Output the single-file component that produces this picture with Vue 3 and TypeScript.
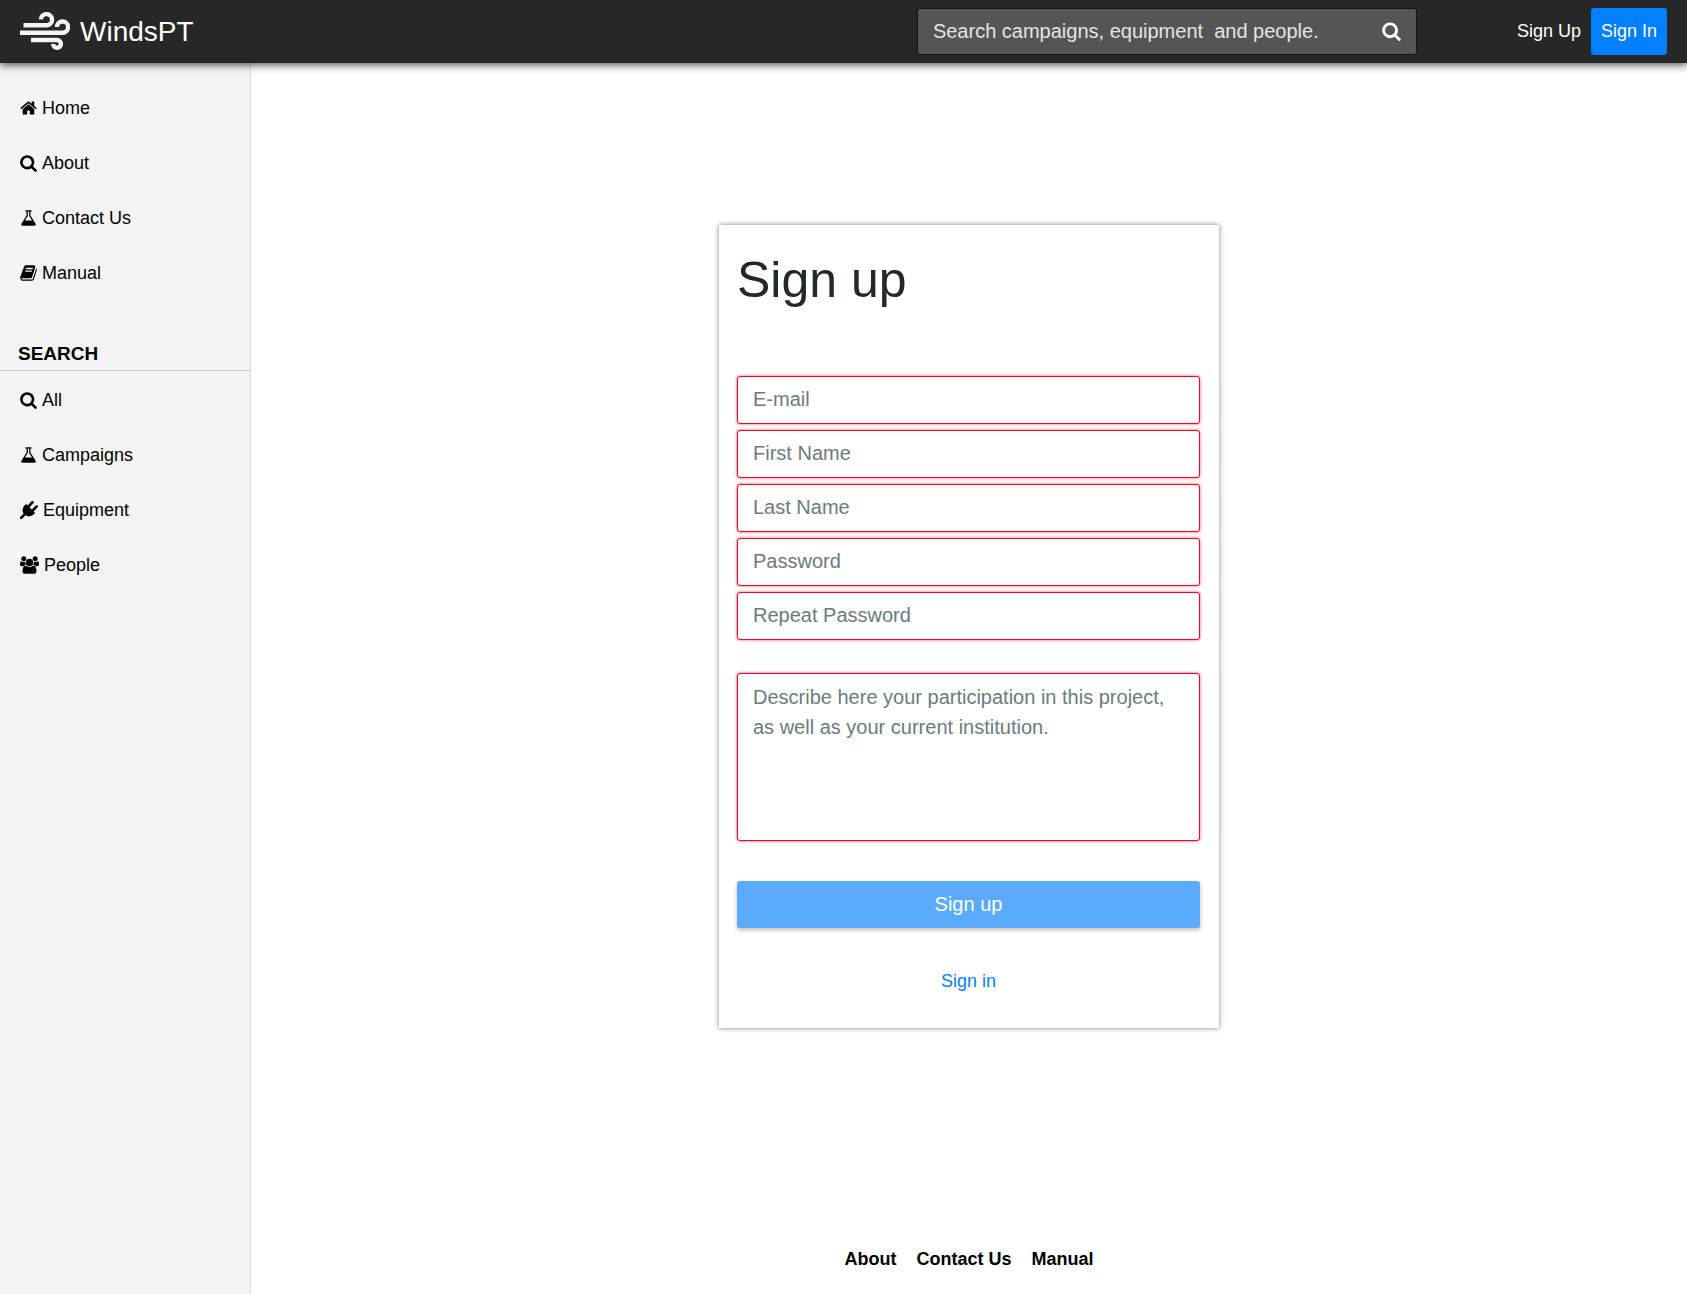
<script setup lang="ts">
import { ref } from 'vue'

interface Icon {
  box: string
  width: number
  path: string
}

const icons: Record<string, Icon> = {
  home: {
    box: '64 0 1664 1792',
    width: 17,
    path: 'M1472 992v480q0 26-19 45t-45 19h-384v-384h-256v384h-384q-26 0-45-19t-19-45v-480q0-1 .5-3t.5-3l575-474 575 474q1 2 1 6zm223-69l-62 74q-8 9-21 11h-3q-13 0-21-7l-692-577-692 577q-12 8-24 7-13-2-21-11l-62-74q-8-10-7-23.5t11-21.5l719-599q32-26 76-26t76 26l244 204v-195q0-14 9-23t23-9h192q14 0 23 9t9 23v408l219 182q10 8 11 21.5t-7 23.5z',
  },
  search: {
    box: '64 0 1664 1792',
    width: 17,
    path: 'M1216 832q0-185-131.5-316.5t-316.5-131.5-316.5 131.5-131.5 316.5 131.5 316.5 316.5 131.5 316.5-131.5 131.5-316.5zm512 832q0 52-38 90t-90 38q-54 0-90-38l-343-342q-179 124-399 124-143 0-273.5-55.5t-225-150-150-225-55.5-273.5 55.5-273.5 150-225 225-150 273.5-55.5 273.5 55.5 225 150 150 225 55.5 273.5q0 220-124 399l343 343q37 37 37 90z',
  },
  flask: {
    box: '64 0 1664 1792',
    width: 17,
    path: 'M1591 1448q56 89 21.5 152.5t-140.5 63.5h-1152q-106 0-140.5-63.5t21.5-152.5l503-793v-399h-64q-26 0-45-19t-19-45 19-45 45-19h512q26 0 45 19t19 45-19 45-45 19h-64v399zm-779-725l-272 429h712l-272-429-20-31v-436h-128v436z',
  },
  book: {
    box: '64 0 1664 1792',
    width: 17,
    path: 'M1703 478q40 57 18 129l-275 906q-19 64-76.5 107.5t-122.5 43.5h-923q-77 0-148.5-53.5t-99.5-131.5q-24-67-2-127 0-4 3-27t4-37q1-8-3-21.5t-3-19.5q2-11 8-21t16.5-23.5 16.5-23.5q23-38 45-91.5t30-91.5q3-10 .5-30t-.5-28q3-11 17-28t17-23q21-36 42-92t25-90q1-9-2.5-32t.5-28q4-13 22-30.5t22-22.5q19-26 42.5-84.5t27.5-96.5q1-8-3-25.5t-2-26.5q2-8 9-18t18-23 17-21q8-12 16.5-30.5t15-35 16-36 19.5-32 26.5-23.5 36-11.5 47.5 5.5l-1 3q38-9 51-9h761q74 0 114 56t18 130l-274 906q-36 119-71.5 153.5t-128.5 34.5h-869q-27 0-38 15-11 16-1 43 24 70 144 70h923q29 0 56-15.5t35-41.5l300-987q7-22 5-57 38 15 59 43zm-1064 2q-4 13 2 22.5t20 9.5h608q13 0 25.5-9.5t16.5-22.5l21-64q4-13-2-22.5t-20-9.5h-608q-13 0-25.5 9.5t-16.5 22.5zm-83 256q-4 13 2 22.5t20 9.5h608q13 0 25.5-9.5t16.5-22.5l21-64q4-13-2-22.5t-20-9.5h-608q-13 0-25.5 9.5t-16.5 22.5z',
  },
  plug: {
    box: '0 0 1792 1792',
    width: 18,
    path: 'M1755 453q37 38 37 90.5t-37 90.5l-401 400 150 150-160 160q-163 163-389.5 186.5t-411.5-100.5l-362 362h-181v-181l362-362q-124-185-100.5-411.5t186.5-389.5l160-160 150 150 400-401q38-37 91-37t90 37 37 90.5-37 90.5l-400 401 234 234 401-400q38-37 91-37t90 37z',
  },
  users: {
    box: '0 0 1920 1792',
    width: 19,
    path: 'M593 896q-162 5-265 128h-134q-82 0-138-40.5t-56-118.5q0-353 124-353 6 0 43.5 21t97.5 42.5 119 21.5q67 0 133-23-5 37-5 66 0 139 81 256zm1071 637q0 120-73 189.5t-194 69.5h-874q-121 0-194-69.5t-73-189.5q0-53 3.5-103.5t14-109 26.5-108.5 43-97.5 62-81 85.5-53.5 111.5-20q10 0 43 21.5t73 48 107 48 135 21.5 135-21.5 107-48 73-48 43-21.5q61 0 111.5 20t85.5 53.5 62 81 43 97.5 26.5 108.5 14 109 3.5 103.5zm-1024-1277q0 106-75 181t-181 75-181-75-75-181 75-181 181-75 181 75 75 181zm704 384q0 159-112.5 271.5t-271.5 112.5-271.5-112.5-112.5-271.5 112.5-271.5 271.5-112.5 271.5 112.5 112.5 271.5zm576 225q0 78-56 118.5t-138 40.5h-134q-103-123-265-128 81-117 81-256 0-29-5-66 66 23 133 23 59 0 119-21.5t97.5-42.5 43.5-21q124 0 124 353zm-128-609q0 106-75 181t-181 75-181-75-75-181 75-181 181-75 181 75 75 181z',
  },
}

const mainLinks = [
  { label: 'Home', icon: icons.home },
  { label: 'About', icon: icons.search },
  { label: 'Contact Us', icon: icons.flask },
  { label: 'Manual', icon: icons.book },
]

const searchLinks = [
  { label: 'All', icon: icons.search },
  { label: 'Campaigns', icon: icons.flask },
  { label: 'Equipment', icon: icons.plug },
  { label: 'People', icon: icons.users },
]

const footerLinks = ['About', 'Contact Us', 'Manual']

const fields = ref([
  { id: 'email', label: 'E-mail', type: 'email', value: '' },
  { id: 'first-name', label: 'First Name', type: 'text', value: '' },
  { id: 'last-name', label: 'Last Name', type: 'text', value: '' },
  { id: 'password', label: 'Password', type: 'password', value: '' },
  { id: 'repeat-password', label: 'Repeat Password', type: 'password', value: '' },
])
const description = ref('')
const query = ref('')
</script>

<template>
  <div class="page">
    <header class="topbar">
      <a class="brand" href="#">
        <svg class="logo" viewBox="0 0 50 39" width="50" height="39" aria-hidden="true">
          <path d="M3.500 13.300H26.500A5.600 5.600 0 1 0 20.900 7.300" />
          <path d="M0 20.700H42.500A5.600 5.600 0 1 0 36.900 15" />
          <path d="M11 28H37A3.900 3.900 0 1 1 33.100 32" />
        </svg>
        <span>WindsPT</span>
      </a>
      <form class="search" role="search" @submit.prevent>
        <input v-model="query" type="text" aria-label="Search" placeholder="Search campaigns, equipment  and people." />
        <button type="submit" aria-label="Search">
          <svg :viewBox="icons.search.box" width="19" height="20" aria-hidden="true"><path :d="icons.search.path" /></svg>
        </button>
      </form>
      <nav class="account" aria-label="Account">
        <a href="#">Sign Up</a>
        <a class="primary" href="#">Sign In</a>
      </nav>
    </header>

    <div class="body">
      <aside class="sidebar">
        <nav aria-label="Main">
          <a v-for="link in mainLinks" :key="link.label" class="item" href="#">
            <svg :viewBox="link.icon.box" :width="link.icon.width" height="18" aria-hidden="true"><path :d="link.icon.path" /></svg>
            <span>{{ link.label }}</span>
          </a>
        </nav>
        <h2>SEARCH</h2>
        <nav aria-label="Browse">
          <a v-for="link in searchLinks" :key="link.label" class="item" href="#">
            <svg :viewBox="link.icon.box" :width="link.icon.width" height="18" aria-hidden="true"><path :d="link.icon.path" /></svg>
            <span>{{ link.label }}</span>
          </a>
        </nav>
      </aside>

      <div class="content">
        <main>
          <form class="card" @submit.prevent>
            <h1>Sign up</h1>
            <div class="fields">
              <input
                v-for="field in fields"
                :id="field.id"
                :key="field.id"
                v-model="field.value"
                class="control"
                :type="field.type"
                :placeholder="field.label"
                :aria-label="field.label"
              />
            </div>
            <textarea
              v-model="description"
              class="control"
              aria-label="Participation and institution"
              placeholder="Describe here your participation in this project, as well as your current institution."
            ></textarea>
            <button class="submit" type="submit" disabled>Sign up</button>
            <a class="alternate" href="#">Sign in</a>
          </form>
        </main>
        <footer>
          <a v-for="label in footerLinks" :key="label" href="#">{{ label }}</a>
        </footer>
      </div>
    </div>
  </div>
</template>

<style>
body {
  margin: 0;
  background: #fff;
}
</style>

<style scoped>
.page,
.page * {
  box-sizing: border-box;
}

.page {
  display: flex;
  flex-direction: column;
  min-height: 100vh;
  color: #000;
  font-family: "Liberation Sans", Arial, sans-serif;
  font-size: 18px;
  line-height: 27px;
}

a {
  color: inherit;
  text-decoration: none;
}

input,
textarea,
button {
  font-family: inherit;
  font-size: 20px;
  line-height: 30px;
}

svg {
  flex: none;
  fill: currentColor;
}

.topbar {
  position: relative;
  z-index: 1;
  display: flex;
  align-items: center;
  height: 63px;
  padding: 0 20px;
  background: #272727;
  color: #fff;
  box-shadow: 0 2px 8px rgba(0, 0, 0, 0.7);
}

.brand {
  display: flex;
  align-items: center;
  gap: 10px;
  margin-right: auto;
  font-size: 28px;
}

.logo {
  fill: none;
  stroke: #f4f4f4;
  stroke-width: 4.4;
}

.search {
  display: flex;
  flex: 0 1 500px;
  height: 47px;
  margin-right: 90px;
  padding-bottom: 2px;
  border: 1px solid #111;
  border-radius: 3px;
  background: #555;
}

.search input {
  flex: 1;
  min-width: 0;
  padding: 0 15px;
  border: 0;
  outline: 0;
  background: transparent;
  color: #fff;
}

.search input::placeholder {
  color: #e4e4e4;
  opacity: 1;
}

.search button {
  display: flex;
  align-items: center;
  padding: 0 15px;
  border: 0;
  background: transparent;
  color: #fff;
}

.account {
  display: flex;
  white-space: nowrap;
}

.account a {
  padding: 10px;
  border-radius: 3px;
}

.account .primary {
  background: #007fff;
}

.body {
  display: flex;
  flex: 1;
}

.sidebar {
  flex: none;
  width: 251px;
  padding-top: 18px;
  border-right: 1px solid #e0e0e0;
  background: #f4f4f4;
}

.item {
  display: flex;
  align-items: center;
  gap: 5px;
  padding: 14px 20px;
}

.item svg {
  margin-bottom: 2px;
}

.sidebar h2 {
  margin: 39px 0 2px;
  padding: 0 18px 3px;
  border-bottom: 1px solid #c8c8c8;
  font-size: 19px;
  line-height: 27px;
}

.content {
  display: flex;
  flex: 1;
  flex-direction: column;
  min-width: 0;
}

main {
  display: flex;
  flex: 1;
  align-items: center;
  justify-content: center;
}

.card {
  display: flex;
  flex-direction: column;
  width: 500px;
  padding: 25px 19px 33px 18px;
  background: #fff;
  box-shadow: 0 0 5px rgba(0, 0, 0, 0.5);
}

h1 {
  margin: 0 0 66px;
  color: #23292b;
  font-size: 50px;
  font-weight: 400;
  line-height: 60px;
}

.fields {
  display: flex;
  flex-direction: column;
  gap: 6px;
}

.control {
  width: 100%;
  height: 48px;
  padding: 8px 15px;
  border: 1px solid #ff0022;
  border-radius: 3px;
  outline: 0;
  background: #fff;
  box-shadow: 0 0 3px rgba(255, 0, 34, 0.7);
  color: #495057;
}

.control::placeholder {
  color: #6c7a80;
  opacity: 1;
}

textarea.control {
  height: 168px;
  margin: 33px 0 40px;
  resize: none;
}

.submit {
  height: 47px;
  padding: 0;
  border: 0;
  border-radius: 3px;
  background: #0381fa;
  box-shadow: 0 2px 4px rgba(0, 0, 0, 0.4);
  color: #fff;
  opacity: 0.65;
}

.alternate {
  align-self: center;
  margin-top: 40px;
  color: #007fff;
}

footer {
  display: flex;
  justify-content: center;
  gap: 20px;
  padding: 57px 20px 21px;
  font-weight: 700;
}
</style>
